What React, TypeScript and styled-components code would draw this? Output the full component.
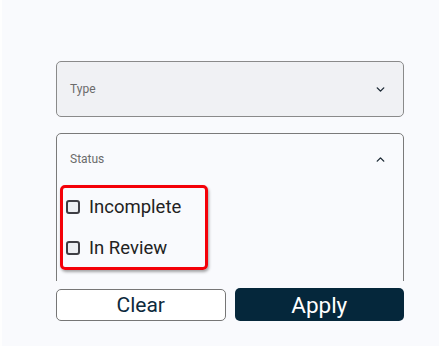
import React from 'react';
import styled, { createGlobalStyle } from 'styled-components';

const GlobalStyle = createGlobalStyle`
  html, body {
    margin: 0;
    padding: 0;
    background: #f9fafd;
    font-family: Roboto, "Liberation Sans", sans-serif;
  }
`;

const Panel = styled.div`
  width: 439px;
  height: 346px;
  box-sizing: border-box;
  border-left: 2px solid #fefefe;
  background: #f9fafd;
  display: flex;
  flex-direction: column;
  padding: 0 35px 0 54px;
  overflow: hidden;
`;

const ScrollArea = styled.div`
  height: 281px;
  overflow: hidden;
  padding-top: 61px;
  box-sizing: border-box;
  display: flex;
  flex-direction: column;
  gap: 16px;
`;

const Section = styled.div<{ $open?: boolean }>`
  border: 1px solid ${p => (p.$open ? '#7a7a7a' : '#8a8a8a')};
  border-radius: 5px;
  background: ${p => (p.$open ? '#f9fafd' : '#f0f1f4')};
  flex-shrink: 0;
  padding: ${p => (p.$open ? '0 0 40px 3px' : '0')};
`;

const SectionHeader = styled.div<{ $open?: boolean }>`
  height: ${p => (p.$open ? '50px' : '54px')};
  display: flex;
  align-items: center;
  justify-content: space-between;
  padding: 0 16px 0 13px;
  margin-left: ${p => (p.$open ? '-3px' : '0')};
  font-size: 12px;
  color: #6b6b6b;
`;

const Chevron = styled.svg`
  width: 13px;
  height: 13px;
  color: #1d2a35;
`;

const Highlight = styled.div`
  width: 139px;
  border: 3px solid #f40008;
  border-radius: 5px;
  box-shadow: 1px 2px 3px rgba(0, 0, 0, 0.35);
  display: flex;
  flex-direction: column;
  padding: 5px 0 6px 3px;
  gap: 14px;
  margin-top: 1px;
`;

const Option = styled.label`
  display: flex;
  align-items: center;
  gap: 9px;
  font-size: 18.5px;
  color: #222222;
  height: 27px;
`;

const Box = styled.span`
  width: 10px;
  height: 10px;
  border: 2px solid #3e3e44;
  border-radius: 3px;
  background: #eceef2;
  flex-shrink: 0;
`;

const Footer = styled.div`
  display: grid;
  grid-template-columns: 1fr 1fr;
  gap: 9px;
  margin-top: 7px;
`;

const Button = styled.button<{ $primary?: boolean }>`
  height: ${p => (p.$primary ? '33px' : '32px')};
  margin-top: ${p => (p.$primary ? '0' : '1px')};
  border-radius: 5px;
  border: ${p => (p.$primary ? 'none' : '1px solid #767676')};
  background: ${p => (p.$primary ? '#05273b' : '#ffffff')};
  color: ${p => (p.$primary ? '#ffffff' : '#0d2a3c')};
  font-family: Roboto, "Liberation Sans", sans-serif;
  font-size: ${p => (p.$primary ? '22.5px' : '21px')};
  padding: 0;
  display: flex;
  align-items: center;
  justify-content: center;
`;

const Down = () => (
  <Chevron viewBox="0 0 24 24" fill="none" stroke="currentColor" strokeWidth="2.6" strokeLinecap="round" strokeLinejoin="round">
    <path d="M6 9l6 6 6-6" />
  </Chevron>
);

const Up = () => (
  <Chevron viewBox="0 0 24 24" fill="none" stroke="currentColor" strokeWidth="2.6" strokeLinecap="round" strokeLinejoin="round">
    <path d="M6 15l6-6 6 6" />
  </Chevron>
);

const statuses = ['Incomplete', 'In Review'];

export default function App() {
  return (
    <>
      <GlobalStyle />
      <Panel>
        <ScrollArea>
          <Section>
            <SectionHeader>
              <span>Type</span>
              <Down />
            </SectionHeader>
          </Section>
          <Section $open>
            <SectionHeader $open>
              <span>Status</span>
              <Up />
            </SectionHeader>
            <Highlight>
              {statuses.map(s => (
                <Option key={s}>
                  <Box />
                  {s}
                </Option>
              ))}
            </Highlight>
          </Section>
        </ScrollArea>
        <Footer>
          <Button>Clear</Button>
          <Button $primary>Apply</Button>
        </Footer>
      </Panel>
    </>
  );
}
